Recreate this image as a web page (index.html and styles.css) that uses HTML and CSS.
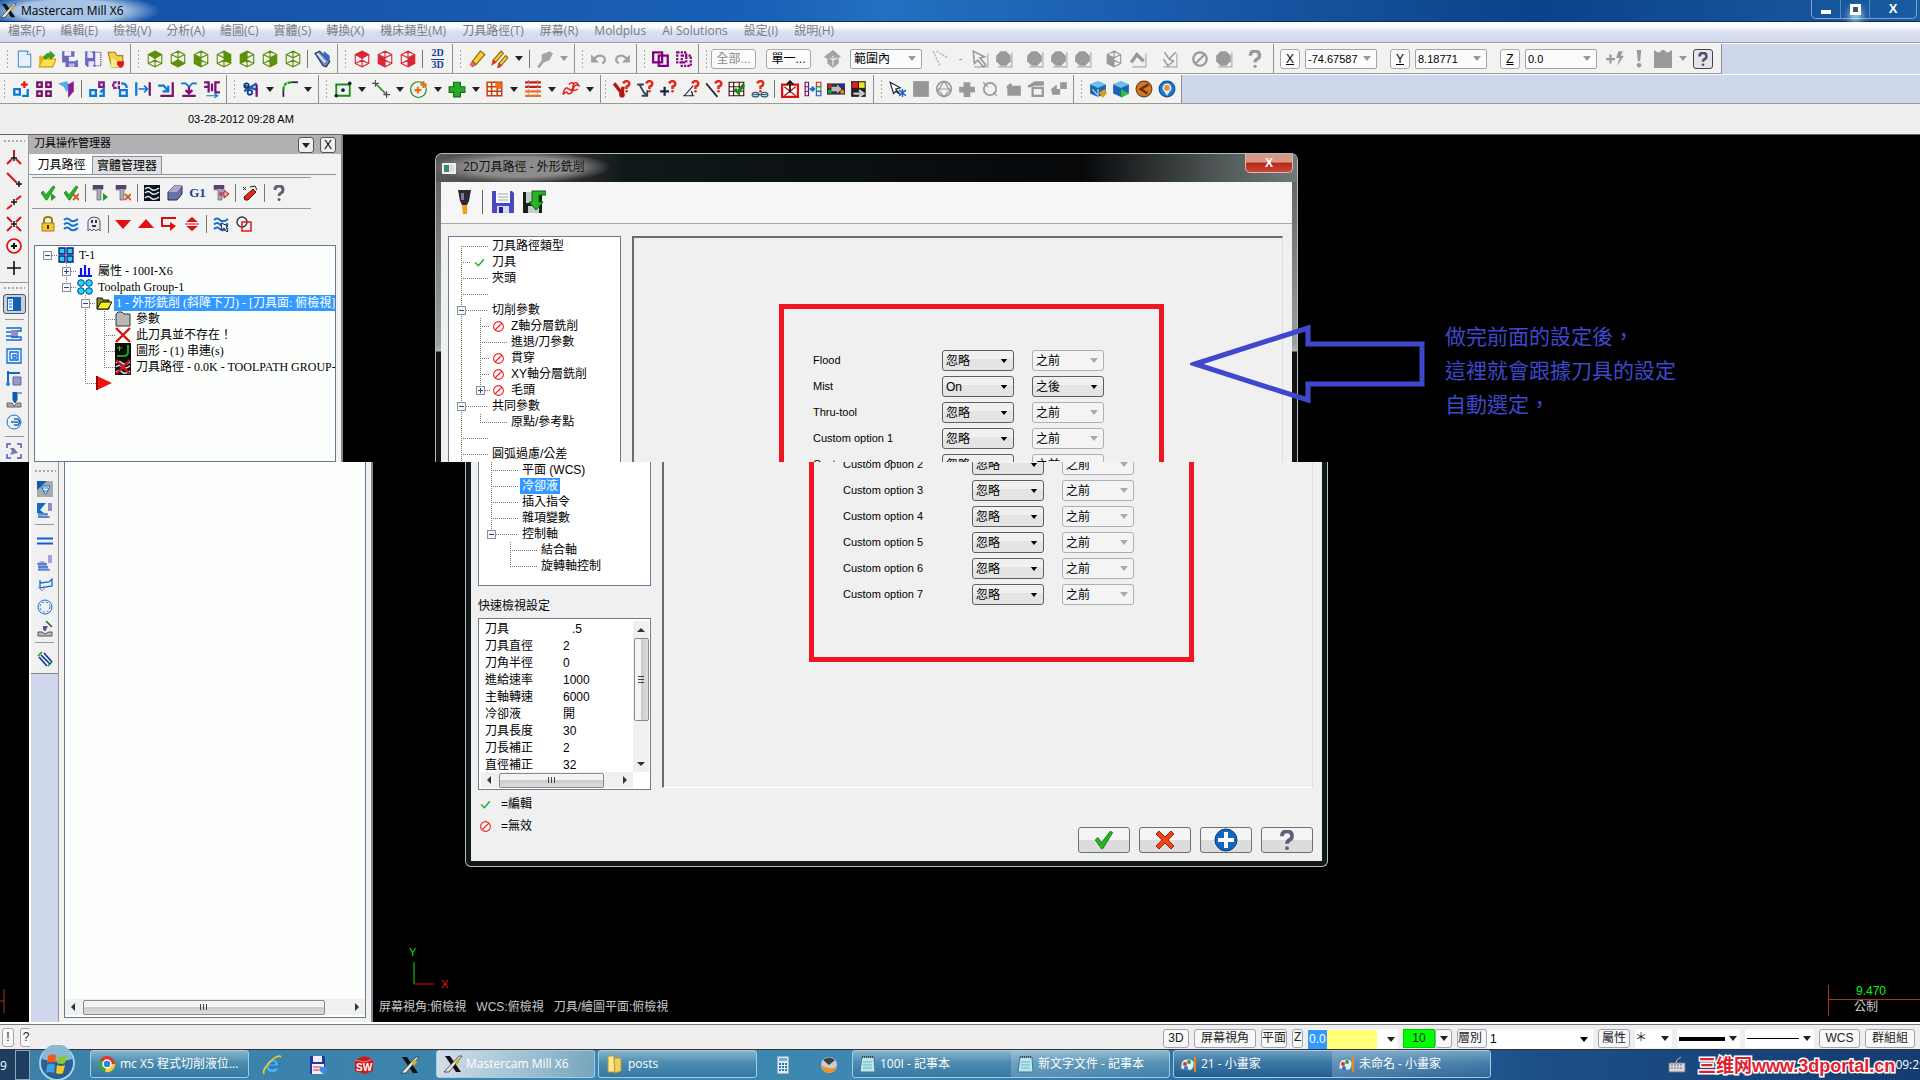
FILE: index.html
```html
<!DOCTYPE html>
<html lang="zh-Hant">
<head>
<meta charset="utf-8">
<title>Mastercam Mill X6</title>
<link rel="stylesheet" href="styles.css">
</head>
<body>
<svg class="defs" aria-hidden="true">
<symbol id="new" viewBox="0 0 16 16"><path d="M3 1h8l3 3v11H3z" fill="#e4f2ff" stroke="#5b93c9"/><path d="M11 1v3h3" fill="#fff" stroke="#5b93c9"/></symbol>
<symbol id="open" viewBox="0 0 16 16"><path d="M1 5h5l1 1h6v3H4l-3 6z" fill="#e8b820"/><path d="M4 8h12l-3 7H1z" fill="#ffe24a" stroke="#c99a10"/><path d="M5 7q2-5 6-4V1l4 4-4 3V6q-3 0-4 2z" fill="#2da82d" stroke="#157015" stroke-width=".5"/></symbol>
<symbol id="save" viewBox="0 0 16 16"><path d="M1 1h11v8h3v6H4v-4H1z" fill="#6a68c0"/><path d="M3 1h6v4H3zM7 6h6v4H7z" fill="#f3f3ff"/><path d="M7 12h5v3H7z" fill="#b9bbe6"/></symbol>
<symbol id="savesel" viewBox="0 0 16 16"><path d="M1 1h9v14H3l-2-2z" fill="#6a68c0"/><path d="M3 1h5v6H3zM4 10h5v5H4z" fill="#e6e6fa"/><path d="M7 2h8v12H7" fill="none" stroke="#333a80" stroke-dasharray="1 1"/></symbol>
<symbol id="folderdn" viewBox="0 0 16 16"><path d="M1 2h6l2 3h5v10H4z" fill="#f3cf52" stroke="#a8801c"/><path d="M4 7l8 4-2 4H3z" fill="#ffe68a"/><path d="M9 10h6v3l-3 3-3-3z" fill="#d81818"/></symbol>
<symbol id="cube" viewBox="0 0 16 16"><path d="M8 1l6 3v8l-6 3-6-3V4zM2 4l6 3 6-3M8 7v8M2 12l6-3 6 3M8 1v8" fill="none" stroke="currentColor"/></symbol>
<symbol id="ftop" viewBox="0 0 16 16"><path d="M8 1l6 3-6 4-6-4z" fill="currentColor"/></symbol>
<symbol id="fbot" viewBox="0 0 16 16"><path d="M8 8l6 4-6 3-6-3z" fill="currentColor"/></symbol>
<symbol id="fleft" viewBox="0 0 16 16"><path d="M2 4l6 3v8l-6-3z" fill="currentColor"/></symbol>
<symbol id="fright" viewBox="0 0 16 16"><path d="M14 4L8 7v8l6-3z" fill="currentColor"/></symbol>
<symbol id="fback" viewBox="0 0 16 16"><path d="M8 1l6 3v8L8 9z" fill="currentColor"/></symbol>
<symbol id="fbackl" viewBox="0 0 16 16"><path d="M8 1L2 4v8l6-3z" fill="currentColor"/></symbol>
<symbol id="pan" viewBox="0 0 16 16"><path d="M1 3l4-2 9 9-3 5-3-1z" fill="#6b86b8" stroke="#26365c"/><path d="M3 3l7 8" stroke="#dfe9ff" stroke-width="2"/><path d="M9 1l5 4v4L8 4z" fill="#2f6fd0"/></symbol>
<symbol id="pencil" viewBox="0 0 16 16"><path d="M4 10L11 1l4 3-8 9z" fill="#f7cf30" stroke="#8c6410"/><path d="M4 10l3 3-3 2-2-2z" fill="#f06a6a" stroke="#a01818" stroke-width=".6"/></symbol>
<symbol id="pencils" viewBox="0 0 16 16"><path d="M2 9L9 1l2 2-7 8zM7 12l6-7 2 2-6 7z" fill="#f7cf30" stroke="#8c6410"/><path d="M2 9l2 2-3 2zM7 12l2 2-3 2z" fill="#e03030" stroke="#e03030"/></symbol>
<symbol id="gpen" viewBox="0 0 16 16"><path d="M5 4l7-3 3 2-3 6-5 2-4 5-2-1 4-6z" fill="#a5a5a5"/></symbol>
<symbol id="undo" viewBox="0 0 16 16"><path d="M3 9q4-6 9-3 3 3-1 6" fill="none" stroke="#a0a0a0" stroke-width="2"/><path d="M1 4v7h7z" fill="#a0a0a0"/></symbol>
<symbol id="redo" viewBox="0 0 16 16"><path d="M13 9Q9 3 4 6q-3 3 1 6" fill="none" stroke="#a0a0a0" stroke-width="2"/><path d="M15 4v7H8z" fill="#a0a0a0"/></symbol>
<symbol id="dup" viewBox="0 0 16 16"><path d="M1 2h8v9H1zM6 5h8v9H6z" fill="none" stroke="#800080" stroke-width="2"/></symbol>
<symbol id="dupd" viewBox="0 0 16 16"><path d="M2 2h8v9H2zM6 5h8v9H6z" fill="none" stroke="#800080" stroke-width="2" stroke-dasharray="2 1"/></symbol>
<symbol id="blob" viewBox="0 0 16 16"><path d="M15 2v13H3" fill="none" stroke="#aaa"/><path d="M5 1h5l4 4v5l-4 4H5l-4-4V5z" fill="#9a9a9a"/></symbol>
<symbol id="gcur" viewBox="0 0 16 16"><path d="M15 3v12H3" fill="none" stroke="#aaa"/><path d="M2 1l10 5-4 1 5 6-2 2-5-6-3 3z" fill="none" stroke="#999" stroke-width="1.400"/></symbol>
<symbol id="gdot" viewBox="0 0 16 16"><path d="M1 1l6 13M4 1l10 6" stroke="#aaa" stroke-dasharray="2 1" fill="none"/></symbol>
<symbol id="ghouse" viewBox="0 0 16 16"><path d="M0 6l8-6 7 6-2 1v5l-5 4-5-4V8z" fill="#a2a2a2"/><path d="M8 5v9M5 7l3 2 4-2" stroke="#eee" fill="none"/></symbol>
<symbol id="gup" viewBox="0 0 16 16"><path d="M15 3v12H3" fill="none" stroke="#aaa"/><path d="M2 11l5-7 6 6" fill="none" stroke="#999" stroke-width="3"/></symbol>
<symbol id="gchk" viewBox="0 0 16 16"><path d="M15 3v12H3" fill="none" stroke="#aaa"/><path d="M4 2l4 6 4 2-5 4-4-6M8 8l6-6" fill="none" stroke="#999" stroke-width="1.300"/></symbol>
<symbol id="gno" viewBox="0 0 16 16"><circle cx="8" cy="8" r="6" fill="none" stroke="#999" stroke-width="2"/><path d="M4 12l8-8" stroke="#999" stroke-width="2"/></symbol>
<symbol id="q" viewBox="0 0 16 16"><path d="M4 5q0-4 4-4t4 4q0 2-2 3-2 1-2 3" fill="none" stroke="currentColor" stroke-width="3"/><circle cx="8" cy="14.500" r="1.500" fill="currentColor"/></symbol>
<symbol id="bolt" viewBox="0 0 16 16"><path d="M0 7h3V4h2v3h3v2H5v3H3V9H0zM11 1h4l-2 4h3l-6 9 2-7H9z" fill="#999"/></symbol>
<symbol id="bang" viewBox="0 0 16 16"><path d="M6 0h4l-1 10H7z" fill="#999"/><circle cx="8" cy="13.500" r="2" fill="#999"/></symbol>
<symbol id="gbox" viewBox="0 0 16 16"><path d="M0 0l3 2h2l2-2h2l2 2h2l3-2v16H0z" fill="#9a9a9a"/></symbol>
<symbol id="copyrot" viewBox="0 0 16 16"><path d="M2 8h5v5H2z" fill="none" stroke="#0a78d8" stroke-width="2"/><path d="M9 14h5V8" fill="none" stroke="#0a78d8" stroke-width="2"/><path d="M11 1v6M8 4h6" stroke="#e01818" stroke-width="2"/></symbol>
<symbol id="four" viewBox="0 0 16 16"><path d="M2 2h4v4H2zM10 2h4v4h-4zM2 10h4v4H2zM10 10h4v4h-4z" fill="none" stroke="#7a1070" stroke-width="2"/></symbol>
<symbol id="mirror" viewBox="0 0 16 16"><path d="M0 3l8-2 2 3-2 7-3-5z" fill="#58a8f0"/><path d="M9 4l5-3v9l-5 6z" fill="#8a1a90"/></symbol>
<symbol id="xf1" viewBox="0 0 16 16"><path d="M2 9h5v5H2z" fill="none" stroke="#0a78d8" stroke-width="2"/><path d="M10 2h4v4h-4z" fill="none" stroke="#8a1080" stroke-width="2"/><path d="M10 14h4V8l-3 3" fill="none" stroke="#0a78d8" stroke-width="2"/></symbol>
<symbol id="xf2" viewBox="0 0 16 16"><path d="M2 2h5v5H2z" fill="none" stroke="#8a1080" stroke-width="2" stroke-dasharray="3 1"/><path d="M8 9h6v5H8z" fill="none" stroke="#0a78d8" stroke-width="2"/><path d="M9 3q5 0 5 4" fill="none" stroke="#0a78d8" stroke-width="2"/></symbol>
<symbol id="xf3" viewBox="0 0 16 16"><path d="M2 2v12" stroke="#0a78d8" stroke-width="2"/><path d="M14 2v12" stroke="#7a1070" stroke-width="2"/><path d="M4 8h8M9 5l3 3-3 3" stroke="#0a78d8" fill="none" stroke-width="1.500"/></symbol>
<symbol id="xf4" viewBox="0 0 16 16"><path d="M1 5h5l4 5M10 5v5H5" stroke="#0a78d8" fill="none" stroke-width="2"/><path d="M14 2v12H3" stroke="#7a1070" fill="none" stroke-width="2"/></symbol>
<symbol id="xf5" viewBox="0 0 16 16"><path d="M1 3h4l3 3 3-3h4" stroke="#0a78d8" fill="none" stroke-width="1.500"/><path d="M2 14h12M8 6v6M5 9l3 3 3-3" stroke="#7a1070" fill="none" stroke-width="2"/></symbol>
<symbol id="xf6" viewBox="0 0 16 16"><path d="M1 2h4v9M15 2h-4v9h4M1 6h4M8 3v7" stroke="#7a1070" fill="none" stroke-width="2"/><path d="M3 14h10M10 12l3 2-3 2" stroke="#0a78d8" fill="none"/></symbol>
<symbol id="trim" viewBox="0 0 16 16"><path d="M2 5l12 4M2 10l11-7" stroke="#1560b0" stroke-width="2"/><circle cx="4" cy="5" r="2" fill="none" stroke="#103a80" stroke-width="1.500"/><circle cx="7" cy="11" r="2" fill="none" stroke="#103a80" stroke-width="1.500"/><path d="M13 4v11" stroke="#7a1070" stroke-width="2"/></symbol>
<symbol id="fillet" viewBox="0 0 16 16"><path d="M3 15V9" stroke="#223" fill="none" stroke-width="1.500"/><path d="M3 9q0-7 7-7" stroke="#1a9a1a" fill="none" stroke-width="2" stroke-dasharray="3 1"/><path d="M10 2h6" stroke="#223" stroke-width="1.500"/></symbol>
<symbol id="point" viewBox="0 0 16 16"><path d="M2 4h12v10H2z" fill="none" stroke="#1a8a1a" stroke-width="1.600"/><circle cx="8" cy="9" r="1.600" fill="#123"/><circle cx="14" cy="3" r="1.600" fill="#123"/><circle cx="2" cy="14" r="1.600" fill="#123"/></symbol>
<symbol id="line" viewBox="0 0 16 16"><path d="M3 3l10 10" stroke="#2a9a2a" stroke-width="1.500"/><path d="M0 3h6M3 0v6M10 13h6M13 10v6" stroke="#546"/></symbol>
<symbol id="arc" viewBox="0 0 16 16"><circle cx="7.500" cy="8.500" r="7" fill="none" stroke="#1a8a1a"/><path d="M4 9h6M7 6v6M12 1v6M9 4h6" stroke="#f06a10" stroke-width="1.800"/></symbol>
<symbol id="gplus" viewBox="0 0 16 16"><path d="M5 2h6v4h4v5h-4v4H5v-4H1V6h4z" fill="#2aa82a" stroke="#117011"/></symbol>
<symbol id="surf" viewBox="0 0 16 16"><path d="M1 2h13v12H1zM1 6h13M1 10h13M5 2v12M10 2v12" fill="none" stroke="#c04010" stroke-width="1.300"/><circle cx="11" cy="5" r="3" fill="#f07020"/></symbol>
<symbol id="bars" viewBox="0 0 16 16"><path d="M1 2h14M1 6h14" stroke="#d01818" stroke-width="2"/><path d="M1 10h14M1 14h14" stroke="#f07020" stroke-width="2"/><path d="M4 0v16M12 0v16" stroke="#999" stroke-dasharray="1 1"/></symbol>
<symbol id="curl" viewBox="0 0 16 16"><path d="M1 13q1-8 5-5t4-5q3-2 5 2-4-2-5 3t-5 4q-1-3-4 1M6 4q3-3 5 0M4 7q6 4 10 1" fill="none" stroke="#e02020" stroke-width="1.300"/></symbol>
<symbol id="aq1" viewBox="0 0 16 16"><path d="M1 3l7 9 1-6" fill="none" stroke="#b01818" stroke-width="3"/><circle cx="8" cy="13" r="2.500" fill="#b01818"/></symbol>
<symbol id="aq2" viewBox="0 0 16 16"><path d="M1 4h6M3 4l4 7 3 3M10 9v5H5" fill="none" stroke="#345" stroke-width="1.600"/></symbol>
<symbol id="aq3" viewBox="0 0 16 16"><path d="M1 10h8M5 6v8" stroke="#224" stroke-width="2"/></symbol>
<symbol id="aq4" viewBox="0 0 16 16"><path d="M1 14h10M2 14l8-9M8 10q2 2 1 4" fill="none" stroke="#224"/></symbol>
<symbol id="aq5" viewBox="0 0 16 16"><path d="M1 3l10 12" stroke="#224" stroke-width="1.500"/></symbol>
<symbol id="aq6" viewBox="0 0 16 16"><path d="M1 2h13v12H1zM1 6h13M1 10h13M5 2v12M10 2v12" fill="#fff" stroke="#401010"/><path d="M6 8l3 3 5-7" fill="none" stroke="#109010" stroke-width="3"/></symbol>
<symbol id="aq7" viewBox="0 0 16 16"><path d="M2 13h12" stroke="#357" stroke-width="1"/><ellipse cx="4" cy="13" rx="3" ry="2" fill="none" stroke="#357"/><ellipse cx="12" cy="13" rx="3" ry="2" fill="none" stroke="#357"/></symbol>
<symbol id="rq" viewBox="0 0 16 16"><path d="M9 3q1-2 3-2t2.500 2q0 2-2.500 3v2" fill="none" stroke="#e02818" stroke-width="2.200"/><circle cx="12" cy="10" r="1.200" fill="#e02818"/></symbol>
<symbol id="mc1" viewBox="0 0 16 16"><path d="M1 4h14v11H1z" fill="#fff" stroke="#e01010" stroke-width="2"/><path d="M3 6l10 8M13 6L3 14" stroke="#a01010"/><path d="M8 1v10M5 4l3-3 3 3" fill="none" stroke="#111" stroke-width="1.500"/></symbol>
<symbol id="mc2" viewBox="0 0 16 16"><path d="M1 2h3v4H1zM1 6h3v4H1zM1 10h3v4H1z" fill="none" stroke="#6a106a"/><path d="M11 2h4v4h-4z" fill="none" stroke="#e02020"/><path d="M11 6h4v4h-4z" fill="none" stroke="#20a020"/><path d="M11 10h4v4h-4z" fill="none" stroke="#2050e0"/><path d="M5 8h4M7 6l2 2-2 2" stroke="#0a78d8" fill="none" stroke-width="2"/></symbol>
<symbol id="mc3" viewBox="0 0 16 16"><path d="M0 3h16v10H0z" fill="#334"/><path d="M1 4h3v3H1z" fill="#e02020"/><path d="M1 9h3v3H1z" fill="#2a2"/><path d="M12 4h3v3h-3z" fill="#22d"/><path d="M12 9h3v3h-3z" fill="#f80"/><path d="M4 6h5V4l4 4-4 4v-2H4z" fill="#bbb"/></symbol>
<symbol id="mc4" viewBox="0 0 16 16"><path d="M1 1h13v14H1z" fill="#222"/><path d="M2 2h5v5H2z" fill="#e82020"/><path d="M8 2h5v5H8z" fill="#f8e020"/><path d="M3 12h8M8 9l4 3-4 3" fill="none" stroke="#ccc" stroke-width="2"/></symbol>
<symbol id="sel" viewBox="0 0 16 16"><path d="M1 2l9 5-4 1 4 5-4-3-2 2z" fill="#fff" stroke="#123"/><path d="M12 8v7M9 9l6 5M15 9l-6 5" stroke="#1a60c8" stroke-width="1.300"/></symbol>
<symbol id="gsq" viewBox="0 0 16 16"><path d="M1 1h14v14H1z" fill="#989898"/></symbol>
<symbol id="gglobe" viewBox="0 0 16 16"><circle cx="8" cy="8" r="6.500" fill="none" stroke="#999" stroke-width="1.500"/><path d="M8 1L3 9l5 6 5-6zM1 8h14" fill="none" stroke="#999"/></symbol>
<symbol id="gpl" viewBox="0 0 16 16"><path d="M5 2h6v4h4v5h-4v4H5v-4H1V6h4z" fill="#989898"/></symbol>
<symbol id="gring" viewBox="0 0 16 16"><circle cx="8" cy="8" r="5.500" fill="none" stroke="#999" stroke-width="1.500"/><path d="M2 2l4 4M14 14l-3-3" stroke="#999"/></symbol>
<symbol id="gcb" viewBox="0 0 16 16"><path d="M2 6l3-3h2v2h8v9H3V8z" fill="#989898"/></symbol>
<symbol id="gw" viewBox="0 0 16 16"><path d="M1 6l6-4h7v2H7zM5 7h9v7H5z" fill="none" stroke="#999" stroke-width="2"/></symbol>
<symbol id="gm" viewBox="0 0 16 16"><path d="M9 2h6v6H9zM1 8l5-4v4h3v5H2z" fill="#989898"/></symbol>
<symbol id="b1" viewBox="0 0 16 16"><path d="M1 4l7-3 7 3v8l-7 3-7-3z" fill="#1d63b0"/><path d="M1 4l7 3 7-3-7-3z" fill="#69c0f0"/><path d="M8 8v7M3 8l4 5" stroke="#bfe4ff"/><path d="M9 11l5-3 2 4-4 4z" fill="#d8a020"/></symbol>
<symbol id="b2" viewBox="0 0 16 16"><path d="M1 4l7-3 7 3v8l-7 3-7-3z" fill="#1d63b0"/><path d="M1 4l7 3 7-3-7-3z" fill="#69c0f0"/><path d="M8 8l7 4-7 4z" fill="#30c030"/></symbol>
<symbol id="b3" viewBox="0 0 16 16"><circle cx="8" cy="8" r="7" fill="#d87818" stroke="#6b4020"/><path d="M12 4L5 8l6 4" fill="none" stroke="#583010" stroke-width="2"/></symbol>
<symbol id="b4" viewBox="0 0 16 16"><circle cx="8" cy="8" r="7" fill="#1a78d0" stroke="#185080"/><path d="M8 14l-4-6q0-5 4-5t4 5z" fill="#d8f0ff"/><circle cx="8" cy="7" r="2.500" fill="#f09020"/></symbol>
<symbol id="v1" viewBox="0 0 16 16"><path d="M1 14l5-5M15 14l-5-5M8 0v4" stroke="#e01010" stroke-width="2"/><path d="M8 4v7M5 8h6" stroke="#111" stroke-width="1.500"/></symbol>
<symbol id="v2" viewBox="0 0 16 16"><path d="M1 1l10 10" stroke="#e01010" stroke-width="2"/><path d="M13 9v6M10 12h6" stroke="#111" stroke-width="1.500"/></symbol>
<symbol id="v3" viewBox="0 0 16 16"><path d="M1 15l5-4M10 6l5-4" stroke="#e01010" stroke-width="2"/><path d="M8 5v6M5 8h6" stroke="#111" stroke-width="1.500"/></symbol>
<symbol id="v4" viewBox="0 0 16 16"><path d="M1 1l5 5M10 10l5 5M15 1l-5 5M6 10l-5 5" stroke="#e01010" stroke-width="2"/><path d="M8 5v6M5 8h6" stroke="#111" stroke-width="1.500"/></symbol>
<symbol id="v5" viewBox="0 0 16 16"><circle cx="8" cy="8" r="7" fill="none" stroke="#e01010" stroke-width="1.700"/><path d="M8 5v6M5 8h6" stroke="#111" stroke-width="2"/></symbol>
<symbol id="v6" viewBox="0 0 16 16"><path d="M8 1v14M1 8h14" stroke="#111" stroke-width="1.600"/></symbol>
<symbol id="v7" viewBox="0 0 16 16"><path d="M1 1h14v14H1z" fill="#0e62b8"/><path d="M2 3h5v11H2z" fill="#e8f2fc"/><path d="M3 5h3M3 8h3M3 11h3" stroke="#0e62b8"/></symbol>
<symbol id="v8" viewBox="0 0 16 16"><path d="M5 4h7v8H5z" fill="#8f8fc0"/><path d="M0 2h15v3h-4M0 6h5M5 11h10v3H0M0 10h5" fill="none" stroke="#0e6cc8" stroke-width="1.400"/></symbol>
<symbol id="v9" viewBox="0 0 16 16"><path d="M1 1h14v14H1zM4 4h8v8H4zM7 7h3v3H7z" fill="#e4f0fc" stroke="#0e6cc8" stroke-width="1.300"/></symbol>
<symbol id="v10" viewBox="0 0 16 16"><path d="M2 1v13M2 3h12" stroke="#0e6cc8" stroke-width="2"/><path d="M7 7h8v8H7z" fill="#9a9ac8" stroke="#5a6aa8"/><circle cx="2" cy="14" r="2" fill="#2a80d8"/></symbol>
<symbol id="v11" viewBox="0 0 16 16"><path d="M7 0h4v8l-2 3-2-3zM12 1h4" fill="#0e58b0" stroke="#0e58b0"/><path d="M1 11h5l2 3 3-3h4v4H1z" fill="#aaa" stroke="#666"/></symbol>
<symbol id="v12" viewBox="0 0 16 16"><circle cx="8" cy="8" r="7" fill="none" stroke="#0e6cc8"/><path d="M8 5h4q3 3 0 6H8M5 8h7" fill="none" stroke="#0e6cc8" stroke-width="1.600"/></symbol>
<symbol id="v13" viewBox="0 0 16 16"><path d="M1 5V1h4M11 1h4v4M15 11v4h-4M5 15H1v-4" fill="none" stroke="#4a58c8" stroke-width="1.500"/><path d="M4 5h4l4 5-5 1-3 1 2-4z" fill="#7878b0"/></symbol>
<symbol id="w1" viewBox="0 0 16 16"><path d="M0 0h16v16H0z" fill="#aaa"/><path d="M0 0h10L0 9z" fill="#0e5cb0"/><path d="M4 5h9l-4 8h-1z" fill="#fff" stroke="#0e6cc8"/><path d="M5 7h6M6 10h4" stroke="#0e6cc8"/></symbol>
<symbol id="w2" viewBox="0 0 16 16"><path d="M0 0h9L3 7l4 3H0z" fill="#0e6cc8"/><path d="M11 0h4v8h-4z" fill="#9090c8"/><path d="M1 10h9l2 5H1z" fill="#a0b0e0"/><path d="M1 11h10M1 14h12" stroke="#1a5ac0"/></symbol>
<symbol id="w3" viewBox="0 0 16 16"><path d="M0 5.500h16M0 10.500h16" stroke="#1060d0" stroke-width="2"/></symbol>
<symbol id="w4" viewBox="0 0 16 16"><path d="M11 0h4v8h-4z" fill="#a8a0d8"/><path d="M1 8q5-5 9 2l2 5H1z" fill="#9aa8e0"/><path d="M0 9h10M1 12h10M1 15h12" stroke="#1a5ac0"/></symbol>
<symbol id="w5" viewBox="0 0 16 16"><path d="M3 3v8l12-2V2l-3 3-9 1" fill="none" stroke="#1a68d0" stroke-width="1.300"/><path d="M1 10l4 4 4-4" fill="none" stroke="#99b"/></symbol>
<symbol id="w6" viewBox="0 0 16 16"><circle cx="8" cy="8" r="7" fill="none" stroke="#1a68d0"/><circle cx="8" cy="8" r="5" fill="none" stroke="#1a68d0" stroke-dasharray="2 2"/></symbol>
<symbol id="w7" viewBox="0 0 16 16"><path d="M9 0l6 6M8 5v5" stroke="#1a6a1a" stroke-width="1.500"/><path d="M6 5h5l-2 4H6z" fill="#60508a"/><path d="M1 11h4l3 2 4-2h3v4H1z" fill="#bbc" stroke="#555"/></symbol>
<symbol id="w8" viewBox="0 0 16 16"><path d="M1 5l4-4M11 15l4-4" stroke="#1a9a1a" stroke-width="1.500"/><path d="M2 6l8 9M4 4l9 9M7 2l8 9" stroke="#103a90" stroke-width="1.700"/></symbol>
<symbol id="ok" viewBox="0 0 16 16"><path d="M1 8l2-2 3 4 7-9 2 1-8 13H6z" fill="#28b428" stroke="#117711" stroke-width=".7"/></symbol>
<symbol id="gp" viewBox="0 0 16 16"><path d="M11 8l5 4-5 4z" fill="#18a018"/></symbol>
<symbol id="rx" viewBox="0 0 16 16"><path d="M10 9l6 6M16 9l-6 6" stroke="#e05018" stroke-width="1.800"/></symbol>
<symbol id="tool" viewBox="0 0 16 16"><path d="M1 0h10v4l-2 1v10H5V5H1z" fill="#a8a8b8" stroke="#555" stroke-width=".6"/><path d="M1 0h10v4H1z" fill="#5a4070"/></symbol>
<symbol id="bwave" viewBox="0 0 16 16"><path d="M0 0h16v16H0z" fill="#0c1018"/><path d="M1 4q3-3 6 0t8-1M1 8q3-3 6 0t8-1M1 13q3-3 6 0t8-1" fill="none" stroke="#d8f0ff" stroke-width="1.500"/></symbol>
<symbol id="wave" viewBox="0 0 16 16"><path d="M1 4q3-3 6 0t8-1M1 8.500q3-3 6 0t8-1M1 13q3-3 6 0t8-1" fill="none" stroke="#1070d0" stroke-width="1.800"/></symbol>
<symbol id="stock" viewBox="0 0 16 16"><path d="M1 7l6-6h8v8l-5 6H1z" fill="#6a70a8" stroke="#2a2a50"/><path d="M1 7l6-6h8l-5 6z" fill="#a8acd0"/></symbol>
<symbol id="erase" viewBox="0 0 16 16"><path d="M2 12L11 4l3 3-8 8H3z" fill="#e02818" stroke="#501010"/><path d="M1 2l3 3M4 2L1 5M8 2l5-1 2 4" stroke="#222" fill="none"/></symbol>
<symbol id="lock" viewBox="0 0 16 16"><path d="M4 7V4q0-3 4-3t4 3v3" fill="none" stroke="#a07810" stroke-width="2"/><path d="M2 7h12v8H2z" fill="#f8c828" stroke="#a07810"/><path d="M8 9v4" stroke="#402800" stroke-width="2"/></symbol>
<symbol id="ghost" viewBox="0 0 16 16"><path d="M2 15V5q1-4 6-4t6 4v10l-2-2-2 2-2-2-2 2-2-2z" fill="#e8e8f0" stroke="#556"/><path d="M5 4h2v3H5zM9 4h2v3H9zM6 9h4v2H6z" fill="#334"/></symbol>
<symbol id="dn" viewBox="0 0 16 16"><path d="M0 4h16l-8 9z" fill="#e01010"/></symbol>
<symbol id="up" viewBox="0 0 16 16"><path d="M0 12h16L8 3z" fill="#e01010"/></symbol>
<symbol id="ins" viewBox="0 0 16 16"><path d="M15 2H1v8h9" fill="none" stroke="#d01010" stroke-width="2"/><path d="M9 6l6 4-6 5z" fill="#e01010"/></symbol>
<symbol id="ud" viewBox="0 0 16 16"><path d="M2 6h12L8 1zM2 10h12l-6 5z" fill="#e01010"/><path d="M1 8h14" stroke="#e01010"/></symbol>
<symbol id="geo" viewBox="0 0 16 16"><circle cx="6" cy="6" r="5" fill="none" stroke="#333" stroke-width="1.400"/><path d="M6 6h9v9H6z" fill="none" stroke="#e01818" stroke-width="1.500"/></symbol>
<symbol id="cur" viewBox="0 0 16 16"><path d="M8 7l7 3-2 1 2 4-1 1-3-4-2 2z" fill="#fff" stroke="#222"/></symbol>
<symbol id="grp" viewBox="0 0 16 16"><path d="M1 1h6v6H1zM9 1h6v6H9zM1 9h6v6H1zM9 9h6v6H9z" fill="#18d8e8" stroke="#101080" stroke-width="1.300"/></symbol>
<symbol id="props" viewBox="0 0 16 16"><path d="M1 13h14M4 13V5M8 13V2M12 13V5" stroke="#1010f0" stroke-width="2.200" fill="none"/></symbol>
<symbol id="dots" viewBox="0 0 16 16"><g fill="#18e0f0" stroke="#1030a0"><circle cx="4" cy="4" r="3.300"/><circle cx="12" cy="4" r="3.300"/><circle cx="4" cy="12" r="3.300"/><circle cx="12" cy="12" r="3.300"/></g></symbol>
<symbol id="fold" viewBox="0 0 16 16"><path d="M1 3h5l1 2h6v9H1z" fill="#8a8a10" stroke="#111"/><path d="M5 7h11l-4 7H1z" fill="#f8f020" stroke="#111"/></symbol>
<symbol id="gfold" viewBox="0 0 16 16"><path d="M1 3l2-2h4l2 2h6v12H1z" fill="#b8b8b8" stroke="#333"/></symbol>
<symbol id="bigx" viewBox="0 0 16 16"><path d="M1 1l14 14M15 1L1 15" stroke="#e01010" stroke-width="2.400"/></symbol>
<symbol id="gframe" viewBox="0 0 16 16"><path d="M0 0h16v16H0z" fill="#080c08"/><path d="M13 2v7q0 4-5 4H2" fill="none" stroke="#18a018" stroke-width="2"/><path d="M2 5h5M4.500 3v5" stroke="#30d030"/></symbol>
<symbol id="play" viewBox="0 0 16 16"><path d="M1 1l15 7-15 7z" fill="#f01010"/><path d="M1 1v14" stroke="#900" stroke-width="2"/></symbol>
<symbol id="no" viewBox="0 0 12 12"><circle cx="6" cy="6" r="4.500" fill="#fff" stroke="#f02020"/><path d="M3 9l6-6" stroke="#f02020"/></symbol>
<symbol id="chk" viewBox="0 0 12 12"><path d="M2 6l3 3 5-6" fill="none" stroke="#20b030" stroke-width="1.400"/></symbol>
<symbol id="mill" viewBox="0 0 24 24"><path d="M6 0h13l-2 11-2 4h-5l-2-4z" fill="#2c2838"/><path d="M9 3h3v7H9z" fill="#807890"/><path d="M10 15h5v9h-4z" fill="#f0a010"/></symbol>
<symbol id="disk" viewBox="0 0 24 24"><path d="M1 1h20l2 2v20H1z" fill="#4848c0"/><path d="M5 1h14v12H5z" fill="#f8f8ff"/><path d="M7 4h10M7 7h10M7 10h10" stroke="#aaa"/><path d="M6 16h12v7H6z" fill="#d8d8f0"/><path d="M8 17h4v6H8z" fill="#2020a0"/></symbol>
<symbol id="diskg" viewBox="0 0 24 24"><path d="M1 2h19v21H1z" fill="#16201a"/><path d="M4 2h6v11H4zM6 16h11v7H6z" fill="#c8ccc8"/><path d="M10 8V1h14v4h-7v7h4l-7 8-7-8h3z" fill="#28b428" stroke="#0c600c"/></symbol>
<symbol id="mx" viewBox="0 0 20 20"><path d="M2 2h5l11 16h-5z" fill="#111"/><path d="M16 2h3L6 18H1z" fill="#e8e4dc" stroke="#222" stroke-width=".7"/><path d="M12 8l3-4 2 3-3 4z" fill="#c8b030"/></symbol>
<symbol id="paint" viewBox="0 0 20 20"><path d="M2 12q0-7 7-7t6 6-5 5-8-1z" fill="#dff0f4" stroke="#6a8a98"/><circle cx="6" cy="10" r="2" fill="#e03030"/><circle cx="10" cy="8" r="2" fill="#30a040"/><circle cx="7" cy="14" r="2" fill="#2878d8"/><path d="M15 1l2 3v14h-2V4z" fill="#e88820"/></symbol>
<symbol id="note" viewBox="0 0 20 20"><path d="M4 3h12l1 15H2z" fill="#b8e8f0" stroke="#487890"/><path d="M5 8h9M5 11h9M5 14h9" stroke="#70b0c0"/><path d="M4 3h12" stroke="#444" stroke-width="2" stroke-dasharray="1 1"/></symbol>
<symbol id="docs" viewBox="0 0 20 20"><path d="M3 2h6l1 16H3z" fill="#ffe890" stroke="#b89830"/><path d="M9 4h7v13l-6 2z" fill="#f0d060" stroke="#b89830"/></symbol>
</svg>

<header class="titlebar">
  <svg class="i20"><use href="#mx"/></svg>
  <h1>Mastercam Mill X6</h1>
  <div class="caption"><button aria-label="Minimize"><i class="min"></i></button><button aria-label="Restore"><i class="rest"></i></button><button class="cx" aria-label="Close">X</button></div>
</header>
<nav class="menubar">
  <a href="#">檔案(F)</a><a href="#">編輯(E)</a><a href="#">檢視(V)</a><a href="#">分析(A)</a><a href="#">繪圖(C)</a><a href="#">實體(S)</a><a href="#">轉換(X)</a><a href="#">機床類型(M)</a><a href="#">刀具路徑(T)</a><a href="#">屏幕(R)</a><a href="#">Moldplus</a><a href="#">Ai Solutions</a><a href="#">設定(I)</a><a href="#">說明(H)</a>
</nav>

<div class="bar">
  <div class="group"><i class="grip"></i><button class="t"><svg><use href="#new"/></svg></button><button class="t"><svg><use href="#open"/></svg></button><button class="t"><svg><use href="#save"/></svg></button><button class="t"><svg><use href="#savesel"/></svg></button><button class="t"><svg><use href="#folderdn"/></svg></button></div>
  <div class="group green"><i class="grip"></i><button class="t"><svg><use href="#cube"/><use href="#ftop"/></svg></button><button class="t"><svg><use href="#cube"/><use href="#fbot"/></svg></button><button class="t"><svg><use href="#cube"/><use href="#fleft"/></svg></button><button class="t"><svg><use href="#cube"/><use href="#fback"/></svg></button><button class="t"><svg><use href="#cube"/><use href="#fbackl"/></svg></button><button class="t"><svg><use href="#cube"/><use href="#fright"/></svg></button><button class="t"><svg><use href="#cube"/></svg></button><i class="sep"></i><button class="t"><svg><use href="#pan"/></svg></button></div>
  <div class="group red"><i class="grip"></i><button class="t"><svg><use href="#cube"/><use href="#ftop"/></svg></button><button class="t"><svg><use href="#cube"/><use href="#fleft"/></svg></button><button class="t"><svg><use href="#cube"/><use href="#fright"/></svg></button><i class="sep"></i><button class="t dim"><b>2D</b><b>3D</b></button></div>
  <div class="group"><i class="grip"></i><button class="t"><svg><use href="#pencil"/></svg></button><button class="t"><svg><use href="#pencils"/></svg></button><button class="caret"></button><i class="sep"></i><button class="t"><svg><use href="#gpen"/></svg></button><button class="caret off"></button></div>
  <div class="group"><i class="grip"></i><button class="t"><svg><use href="#undo"/></svg></button><button class="t"><svg><use href="#redo"/></svg></button></div>
  <div class="group"><i class="grip"></i><button class="t"><svg><use href="#dup"/></svg></button><button class="t"><svg><use href="#dupd"/></svg></button></div>
  <div class="group wide"><i class="grip"></i><button class="txt off">全部...</button><i class="sp"></i><button class="txt">單一...</button><i class="sp"></i><button class="w"><svg><use href="#ghouse"/></svg></button><select class="combo range" aria-label="範圍"><option>範圍內</option></select><i class="sp"></i><button class="w"><svg><use href="#gdot"/></svg></button><button class="dash">-</button><button class="w"><svg><use href="#gcur"/></svg></button><button class="w"><svg><use href="#blob"/></svg></button><i class="sp"></i><button class="w"><svg><use href="#blob"/></svg></button><button class="w"><svg><use href="#blob"/></svg></button><button class="w"><svg><use href="#blob"/></svg></button><i class="sp"></i><button class="w grey"><svg><use href="#cube"/><use href="#fleft"/></svg></button><button class="w"><svg><use href="#gup"/></svg></button><i class="sp"></i><button class="w"><svg><use href="#gchk"/></svg></button><i class="sp"></i><button class="w"><svg><use href="#gno"/></svg></button><button class="w"><svg><use href="#blob"/></svg></button><i class="sp"></i><button class="w grey"><svg><use href="#q"/></svg></button></div>
  <div class="group coords"><button class="txt key"><u>X</u></button><select class="combo" aria-label="X"><option>-74.67587</option></select><i class="sp"></i><button class="txt key"><u>Y</u></button><select class="combo" aria-label="Y"><option>8.18771</option></select><i class="sp"></i><button class="txt key"><u>Z</u></button><select class="combo" aria-label="Z"><option>0.0</option></select><div class="run"><button class="w"><svg><use href="#bolt"/></svg></button><button class="w"><svg><use href="#bang"/></svg></button><button class="w"><svg><use href="#gbox"/></svg></button><button class="caret off"></button></div><button class="txt key help"><svg><use href="#q"/></svg></button></div>
</div>

<div class="bar two">
  <div class="group tight"><i class="grip"></i><button class="t"><svg><use href="#copyrot"/></svg></button><button class="t"><svg><use href="#four"/></svg></button><button class="t"><svg><use href="#mirror"/></svg></button><i class="sep"></i><button class="t"><svg><use href="#xf1"/></svg></button><button class="t"><svg><use href="#xf2"/></svg></button><button class="t"><svg><use href="#xf3"/></svg></button><button class="t"><svg><use href="#xf4"/></svg></button><button class="t"><svg><use href="#xf5"/></svg></button><button class="t"><svg><use href="#xf6"/></svg></button></div>
  <div class="group"><i class="grip"></i><button class="t"><svg><use href="#trim"/></svg></button><button class="caret"></button><button class="t"><svg><use href="#fillet"/></svg></button><button class="caret"></button></div>
  <div class="group"><i class="grip"></i><button class="t"><svg><use href="#point"/></svg></button><button class="caret"></button><button class="t"><svg><use href="#line"/></svg></button><button class="caret"></button><button class="t"><svg><use href="#arc"/></svg></button><button class="caret"></button><button class="t"><svg><use href="#gplus"/></svg></button><button class="caret"></button><button class="t"><svg><use href="#surf"/></svg></button><button class="caret"></button><button class="t"><svg><use href="#bars"/></svg></button><button class="caret"></button><button class="t"><svg><use href="#curl"/></svg></button><button class="caret"></button></div>
  <div class="group tight"><i class="grip"></i><button class="t"><svg><use href="#aq1"/><use href="#rq"/></svg></button><button class="t"><svg><use href="#aq2"/><use href="#rq"/></svg></button><button class="t"><svg><use href="#aq3"/><use href="#rq"/></svg></button><button class="t"><svg><use href="#aq4"/><use href="#rq"/></svg></button><button class="t"><svg><use href="#aq5"/><use href="#rq"/></svg></button><button class="t"><svg><use href="#aq6"/></svg></button><button class="t"><svg><use href="#aq7"/><use href="#rq" x="-4"/></svg></button><i class="sep"></i><button class="t"><svg><use href="#mc1"/></svg></button><button class="t"><svg><use href="#mc2"/></svg></button><button class="t"><svg><use href="#mc3"/></svg></button><button class="t"><svg><use href="#mc4"/></svg></button></div>
  <div class="group"><i class="grip"></i><button class="t"><svg><use href="#sel"/></svg></button><button class="t"><svg><use href="#gsq"/></svg></button><button class="t"><svg><use href="#gglobe"/></svg></button><button class="t"><svg><use href="#gpl"/></svg></button><button class="t"><svg><use href="#gring"/></svg></button><button class="t"><svg><use href="#gcb"/></svg></button><button class="t"><svg><use href="#gw"/></svg></button><button class="t"><svg><use href="#gm"/></svg></button></div>
  <div class="group"><i class="grip"></i><button class="t"><svg><use href="#b1"/></svg></button><button class="t"><svg><use href="#b2"/></svg></button><button class="t"><svg><use href="#b3"/></svg></button><button class="t"><svg><use href="#b4"/></svg></button></div>
</div>
<div class="ribbon">03-28-2012 09:28 AM</div>

<section class="work upper">
  <div class="vbar">
    <i class="hgrip"></i><button><svg><use href="#v1"/></svg></button><button><svg><use href="#v2"/></svg></button><button><svg><use href="#v3"/></svg></button><button><svg><use href="#v4"/></svg></button><button><svg><use href="#v5"/></svg></button><button><svg><use href="#v6"/></svg></button><i class="vline full"></i><i class="hgrip"></i><button class="pressed"><svg><use href="#v7"/></svg></button><i class="vline"></i><button><svg><use href="#v8"/></svg></button><button><svg><use href="#v9"/></svg></button><button><svg><use href="#v10"/></svg></button><button><svg><use href="#v11"/></svg></button><button><svg><use href="#v12"/></svg></button><i class="vline"></i><button><svg><use href="#v13"/></svg></button>
  </div>
  <aside class="manager">
    <div class="mtitle"><h2>刀具操作管理器</h2><button aria-label="Menu" class="caret"></button><button aria-label="Close">X</button></div>
    <div class="tabs"><button class="on">刀具路徑</button><button>實體管理器</button></div>
    <div class="mtools"><button class="t"><svg><use href="#ok"/><use href="#gp"/></svg></button><button class="t"><svg><use href="#ok"/><use href="#rx"/></svg></button><i class="sep"></i><button class="t"><svg><use href="#tool"/><use href="#gp"/></svg></button><button class="t"><svg><use href="#tool"/><use href="#rx"/></svg></button><i class="sep"></i><button class="t"><svg><use href="#bwave"/></svg></button><button class="t"><svg><use href="#stock"/></svg></button><button class="t g1">G1</button><button class="t"><svg viewBox="0 0 16 16"><use href="#tool"/><path d="M7 8h4V5l5 4-5 4v-3H7z" fill="#f0a0a0" stroke="#a01818"/></svg></button><i class="sep"></i><button class="t"><svg><use href="#erase"/></svg></button><i class="sep"></i><button class="t slate"><svg><use href="#q"/></svg></button></div>
    <div class="mtools"><button class="t"><svg><use href="#lock"/></svg></button><button class="t"><svg><use href="#wave"/></svg></button><button class="t"><svg><use href="#ghost"/></svg></button><i class="sep"></i><button class="t"><svg><use href="#dn"/></svg></button><button class="t"><svg><use href="#up"/></svg></button><button class="t"><svg><use href="#ins"/></svg></button><button class="t"><svg><use href="#ud"/></svg></button><i class="sep"></i><button class="t"><svg><use href="#wave"/><use href="#cur"/></svg></button><button class="t"><svg><use href="#geo"/></svg></button></div>
    <div class="mtree">
      <ul class="tree ops">
        <li class="root"><div class="row"><i class="exp"></i><i class="stub"></i><svg><use href="#grp"/></svg>T-1</div>
          <ul>
            <li><div class="row"><i class="exp plus"></i><i class="stub"></i><svg><use href="#props"/></svg>屬性 - 100I-X6</div></li>
            <li class="last"><div class="row"><i class="exp"></i><i class="stub"></i><svg><use href="#dots"/></svg>Toolpath Group-1</div>
              <ul>
                <li><div class="row"><i class="exp"></i><i class="stub"></i><svg><use href="#fold"/></svg><mark>1 - 外形銑削 (斜降下刀) - [刀具面: 俯檢視]</mark></div>
                  <ul>
                    <li><div class="row"><i class="stub"></i><svg><use href="#gfold"/></svg>參數</div></li>
                    <li><div class="row"><i class="stub"></i><svg><use href="#bigx"/></svg>此刀具並不存在！</div></li>
                    <li><div class="row"><i class="stub"></i><svg><use href="#gframe"/></svg>圖形 - (1) 串連(s)</div></li>
                    <li class="last"><div class="row"><i class="stub"></i><svg><use href="#bwave"/><use href="#bigx"/></svg>刀具路徑 - 0.0K - TOOLPATH GROUP-1</div></li>
                  </ul></li>
                <li class="last"><div class="row"><i class="stub"></i><svg><use href="#play"/></svg></div></li>
              </ul></li>
          </ul></li>
      </ul>
    </div>
  </aside>
  <main class="canvas">
    <div class="dialog top">
      <div class="dtitle"><i class="dico"></i><h2>2D刀具路徑 - 外形銑削</h2><button aria-label="Close">X</button></div>
      <div class="client">
        <div class="dtools"><svg><use href="#mill"/></svg><i></i><svg><use href="#disk"/></svg><svg><use href="#diskg"/></svg></div>
        <div class="dbody">
          <div class="left"><div class="ptree">
            <ul class="tree">
              <li class="first"><div class="row"><i class="stub"></i>刀具路徑類型</div></li>
              <li><div class="row"><i class="stub s"></i><svg><use href="#chk"/></svg>刀具</div></li>
              <li><div class="row"><i class="stub"></i>夾頭</div></li>
              <li><div class="row"><i class="stub"></i></div></li>
              <li><div class="row"><i class="exp"></i><i class="stub"></i>切削參數</div>
                <ul>
                  <li><div class="row"><i class="stub s"></i><svg><use href="#no"/></svg>Z軸分層銑削</div></li>
                  <li><div class="row"><i class="stub"></i>進退/刀參數</div></li>
                  <li><div class="row"><i class="stub s"></i><svg><use href="#no"/></svg>貫穿</div></li>
                  <li><div class="row"><i class="stub s"></i><svg><use href="#no"/></svg>XY軸分層銑削</div></li>
                  <li class="last"><div class="row"><i class="exp plus"></i><i class="stub s"></i><svg><use href="#no"/></svg>毛頭</div></li>
                </ul></li>
              <li><div class="row"><i class="exp"></i><i class="stub"></i>共同參數</div>
                <ul><li class="last"><div class="row"><i class="stub"></i>原點/參考點</div></li></ul></li>
              <li><div class="row"><i class="stub"></i></div></li>
              <li><div class="row"><i class="stub"></i>圓弧過慮/公差</div></li>
            </ul>
          </div></div>
          <div class="page"><div class="frame open"><div class="coolant">
            <label for="f1">Flood</label><select id="f1"><option>忽略</option></select><select disabled aria-label="Flood"><option>之前</option></select>
            <label for="f2">Mist</label><select id="f2"><option>On</option></select><select aria-label="Mist"><option>之後</option></select>
            <label for="f3">Thru-tool</label><select id="f3"><option>忽略</option></select><select disabled aria-label="Thru-tool"><option>之前</option></select>
            <label for="f4">Custom option 1</label><select id="f4"><option>忽略</option></select><select disabled aria-label="Custom option 1"><option>之前</option></select>
            <label for="f5">Custom option 2</label><select id="f5"><option>忽略</option></select><select disabled aria-label="Custom option 2"><option>之前</option></select>
          </div></div></div>
        </div>
      </div>
    </div>
    <svg class="arrow" viewBox="0 0 236 82"><path d="M5 41L118 5v16h114v40H118v16z" fill="none" stroke="#3f48cc" stroke-width="5"/></svg>
    <p class="memo">做完前面的設定後，<br>這裡就會跟據刀具的設定<br>自動選定，</p>
  </main>
</section>

<section class="work lower">
  <div class="edge"><svg viewBox="0 0 5 24"><path d="M4 0v24M0 12h4" stroke="#a03a18"/></svg></div>
  <div class="vbar">
    <i class="hgrip"></i><button><svg><use href="#w1"/></svg></button><button><svg><use href="#w2"/></svg></button><i class="vline"></i><button><svg><use href="#w3"/></svg></button><button><svg><use href="#w4"/></svg></button><button><svg><use href="#w5"/></svg></button><button><svg><use href="#w6"/></svg></button><button><svg><use href="#w7"/></svg></button><i class="vline"></i><button><svg><use href="#w8"/></svg></button><div class="fill"></div>
  </div>
  <aside class="manager">
    <div class="mtree"><div class="hscroll"><i class="al"></i><b></b><i class="ar"></i></div></div>
  </aside>
  <main class="canvas">
    <div class="dialog bottom">
      <div class="client"><div class="dbody">
        <div class="left">
          <div class="ptree">
            <ul class="tree">
              <li><div class="row"><i class="stub"></i>平面 (WCS)</div></li>
              <li><div class="row"><i class="stub"></i><mark>冷卻液</mark></div></li>
              <li><div class="row"><i class="stub"></i>插入指令</div></li>
              <li><div class="row"><i class="stub"></i>雜項變數</div></li>
              <li class="last"><div class="row"><i class="exp"></i><i class="stub"></i>控制軸</div>
                <ul><li><div class="row"><i class="stub"></i>結合軸</div></li><li class="last"><div class="row"><i class="stub"></i>旋轉軸控制</div></li></ul></li>
            </ul>
          </div>
          <h3>快速檢視設定</h3>
          <div class="quick">
            <div class="qrow"><table>
              <tr><th>刀具</th><td class="in">.5</td></tr><tr><th>刀具直徑</th><td>2</td></tr><tr><th>刀角半徑</th><td>0</td></tr><tr><th>進給速率</th><td>1000</td></tr><tr><th>主軸轉速</th><td>6000</td></tr><tr><th>冷卻液</th><td>開</td></tr><tr><th>刀具長度</th><td>30</td></tr><tr><th>刀長補正</th><td>2</td></tr><tr><th>直徑補正</th><td>32</td></tr>
            </table><div class="vscroll"><i class="au"></i><b></b><i class="ad"></i></div></div>
            <div class="hscroll"><i class="al"></i><b></b><i class="ar"></i></div>
          </div>
          <div class="legend"><svg><use href="#chk"/></svg>=編輯</div>
          <div class="legend"><svg><use href="#no"/></svg>=無效</div>
        </div>
        <div class="right">
          <div class="page"><div class="frame closed"><div class="coolant">
            <label for="g2">Custom option 2</label><select id="g2"><option>忽略</option></select><select disabled aria-label="Custom option 2"><option>之前</option></select>
            <label for="g3">Custom option 3</label><select id="g3"><option>忽略</option></select><select disabled aria-label="Custom option 3"><option>之前</option></select>
            <label for="g4">Custom option 4</label><select id="g4"><option>忽略</option></select><select disabled aria-label="Custom option 4"><option>之前</option></select>
            <label for="g5">Custom option 5</label><select id="g5"><option>忽略</option></select><select disabled aria-label="Custom option 5"><option>之前</option></select>
            <label for="g6">Custom option 6</label><select id="g6"><option>忽略</option></select><select disabled aria-label="Custom option 6"><option>之前</option></select>
            <label for="g7">Custom option 7</label><select id="g7"><option>忽略</option></select><select disabled aria-label="Custom option 7"><option>之前</option></select>
          </div></div></div>
          <div class="actions"><button aria-label="OK"><svg><use href="#ok"/></svg></button><button aria-label="Cancel"><svg viewBox="0 0 20 20"><path d="M1 4l3-3 6 6 6-6 3 3-6 6 6 6-3 3-6-6-6 6-3-3 6-6z" fill="#ee4418" stroke="#a02008"/></svg></button><button aria-label="Add"><svg class="big" viewBox="0 0 24 24"><circle cx="12" cy="12" r="11" fill="#1464c0" stroke="#0a3a80"/><path d="M12 4v16M4 12h16" stroke="#fff" stroke-width="4"/></svg></button><button class="slate" aria-label="Help"><svg><use href="#q"/></svg></button></div>
        </div>
      </div></div>
    </div>
    <div class="hud">
      <div class="axes"><svg viewBox="0 0 50 50"><path d="M6 16v22" stroke="#10e010"/><path d="M6 38h20" stroke="#e01010"/><text x="1" y="10" fill="#10e010">Y</text><text x="33" y="42" fill="#f01010">X</text></svg>
        <p>屏幕視角:俯檢視&nbsp;&nbsp; WCS:俯檢視&nbsp;&nbsp; 刀具/繪圖平面:俯檢視</p></div>
      <div class="units"><b>9.470</b><span>公制</span></div>
    </div>
  </main>
</section>

<footer class="status">
  <div class="frag"><button>!</button><button>?</button></div>
  <div class="fields">
    <button class="a">3D</button><button class="b">屏幕視角</button><button class="a">平面</button><label class="z" for="zd">Z</label>
    <span class="zbox"><input id="zd" value="0.0"><i class="caret"></i></span>
    <button class="color">10</button><button class="caret cb"></button>
    <label class="lv" for="lvl">層別</label><select id="lvl" class="level"><option>1</option></select>
    <button class="c">屬性</button><button class="pick p1"><span>＊</span><i class="caret"></i></button><button class="pick p2"><hr><i class="caret"></i></button><button class="pick p3"><hr><i class="caret"></i></button>
    <button class="d">WCS</button><button class="e">群組組</button>
  </div>
</footer>
<nav class="taskbar">
  <div class="frag">9<i></i></div>
  <button class="start" aria-label="Start"><svg viewBox="0 0 36 36"><circle cx="18" cy="18" r="17" fill="#2a6090" stroke="#a8d0e8" stroke-width="2"/><path d="M3 14a15 15 0 0 1 30 0q-15 5-30 0z" fill="#8ab8d0"/><path d="M9 11q4-3 8-1l-1 8q-4-2-8 0z" fill="#f05820"/><path d="M19 11q4 2 9-1l-2 8q-4 2-8 0z" fill="#88c838"/><path d="M8 20q4-3 8 0l-1 8q-4-2-8 0z" fill="#38a0e8"/><path d="M18 20q4 2 8 0l-2 8q-3 2-7 0z" fill="#f8c820"/></svg></button>
  <button class="task"><svg viewBox="0 0 20 20"><circle cx="10" cy="10" r="8" fill="#e03828"/><path d="M10 10L3 6a8 8 0 0 0 5 12z" fill="#38a848"/><path d="M10 10h8a8 8 0 0 1-10 8z" fill="#f8d030"/><circle cx="10" cy="10" r="4" fill="#3880e0" stroke="#fff" stroke-width="1.500"/></svg>mc X5 程式切削液位...</button>
  <button class="pin"><svg viewBox="0 0 20 20"><path d="M17 11H7q0 3 3 3l3-1h4q-2 5-7 5-6-1-6-7t7-7q6 1 6 7zM7 9h6q0-2-3-2T7 9z" fill="#48b0f0" stroke="#1868b0" stroke-width=".6"/><path d="M2 19Q0 15 8 7t11-5" fill="none" stroke="#f0c028" stroke-width="1.800"/></svg></button><button class="pin"><svg viewBox="0 0 20 20"><path d="M2 1h15v18H2z" fill="#2038a0"/><path d="M5 1h9v6H5zM4 9h12v10H4z" fill="#eef"/><path d="M5 12h8M5 15h8" stroke="#e03030"/><path d="M12 12h7v4l-3 4-4-4z" fill="#4088e0"/></svg></button><button class="pin"><svg viewBox="0 0 20 20"><path d="M1 5l9-4 9 3v12l-8 3-10-3z" fill="#d01818"/><path d="M1 5l10 2 8-3" stroke="#f08080" fill="none"/><text x="2" y="16" class="sw">SW</text></svg></button><button class="pin"><svg><use href="#mx"/></svg></button>
  <button class="task on"><svg><use href="#mx"/></svg>Mastercam Mill X6</button>
  <button class="task"><svg><use href="#docs"/></svg>posts</button>
  <button class="pin"><svg viewBox="0 0 20 20"><path d="M4 1h12v18H4z" fill="#d8ecf8" stroke="#5080a0"/><path d="M6 3h8v3H6z" fill="#70b0e0"/><path d="M6 9h8M6 12h8M6 15h8" stroke="#4070a0" stroke-width="2" stroke-dasharray="2 1"/></svg></button><button class="pin"><svg viewBox="0 0 20 20"><circle cx="10" cy="10" r="8" fill="#c8ccd8"/><path d="M2 10q2 8 8 8t8-8q-3 5-8 3-4 0-8-3z" fill="#f09020"/><path d="M4 5q6-5 12 0l-6 5z" fill="#384048"/></svg></button>
  <div class="task pair"><button><svg><use href="#note"/></svg>100I - 記事本</button><button><svg><use href="#note"/></svg>新文字文件 - 記事本</button></div>
  <div class="task pair"><button><svg><use href="#paint"/></svg>21 - 小畫家</button><button><svg><use href="#paint"/></svg>未命名 - 小畫家</button></div>
  <div class="tray"><svg viewBox="0 0 20 20"><path d="M2 8h16v9H2z" fill="#d8dce0" stroke="#777"/><path d="M4 10h12M4 13h12" stroke="#666" stroke-dasharray="2 1"/><path d="M9 8q0-4 5-6" stroke="#bbb" fill="none"/></svg><span class="mark">三维网www.3dportal.cn</span><span class="clock">09:29</span></div>
</nav>
</body>
</html>
```
FILE: styles.css
```css
* { box-sizing: border-box; }
html, body { height: 100%; }
body {
  margin: 0; min-height: 100vh; display: flex; flex-direction: column; overflow: hidden;
  background: #000; color: #000;
  font: 12px/16px "Liberation Sans", "Noto Sans CJK TC", sans-serif;
}
button { margin: 0; padding: 0; border: 0; background: none; font: inherit; color: inherit; }
h1, h2, h3, p, ul { margin: 0; padding: 0; font-size: 12px; font-weight: 400; }
ul { list-style: none; }
i { font-style: normal; }
svg { width: 16px; height: 16px; flex: none; display: block; }
.defs { position: absolute; width: 0; height: 0; }

/* window caption and menu */
.titlebar {
  flex: none; height: 22px; display: flex; align-items: center; gap: 4px; padding-left: 0;
  border-bottom: 1px solid #0c2c60;
  background: radial-gradient(ellipse 90px 18px at 70px 11px, #a8c4e4 60%, transparent 100%), linear-gradient(90deg, #1450a4, #1a60b8 40%, #2470c0 46%, #1a5cac 60%, #0c4288 80%, #1a5ca0);
}
.titlebar .i20 { width: 17px; height: 17px; }
.titlebar h1 { font: 12px/20px "Open Sans", "Noto Sans", sans-serif; }
.caption { margin-left: auto; align-self: flex-start; display: flex; height: 19px; width: 106px; margin-right: 3px; border: 1px solid #7fa4d0; border-top: 0; border-radius: 0 0 5px 5px; }
.caption button { width: 29px; display: grid; place-items: center; border-right: 1px solid #5c88bc; }
.caption .cx { flex: 1; border: 0; color: #fff; font-weight: 700; font-size: 13px; }
.min { width: 10px; height: 4px; background: #fff; margin-top: 5px; }
.rest { width: 11px; height: 11px; border: 3px solid #fff; background: #456; box-shadow: 0 6px 8px 0 #d8f4ff; }
.menubar {
  flex: none; height: 21px; display: flex; gap: 15px; padding-left: 8px; align-items: center;
  background: linear-gradient(#fbfcfe 25%, #d8dff0 50%, #d3daee); border-bottom: 1px solid #9a98a4;
  font-family: "Open Sans", "Noto Sans CJK TC", sans-serif;
}
.menubar a { color: #7a7c82; text-decoration: none; white-space: nowrap; padding-bottom: 3px; }
.menubar a:nth-child(n+7) { padding-right: 1px; }

/* toolbars */
.bar { flex: none; display: flex; height: 31px; background: #cfd7ea; border-top: 1px solid #fff; }
.bar.two { height: 30px; border-bottom: 1px solid #9a9a9a; }
.group { display: flex; align-items: center; padding: 0 3px 0 6px; background: #f2f2f0; border-right: 1px solid #8e8e8e; border-bottom: 1px solid #9a9a9a; flex: none; }
.two .group { border-bottom: 0; }
.group.tight { padding-left: 3px; }
.grip { width: 6px; height: 20px; background: radial-gradient(circle, #aaa 1px, transparent 1px) 0 0 / 3px 4px repeat-y; }
.sep { width: 7px; height: 18px; background: linear-gradient(#777, #777) 3px 0 / 1px 100% no-repeat; }
.mtools .sep { width: 6px; }
.t { width: 23px; height: 23px; display: grid; place-items: center; flex: none; }
.t svg { grid-area: 1 / 1; }
.bar .t svg, .bar .w svg { width: 18px; height: 18px; }
.w { width: 24px; height: 22px; display: grid; place-items: center; flex: none; }
.green .t { color: #5c9008; } .red .t { color: #d82838; } .grey { color: #999; } .slate { color: #606078; }
.dim b { font: 700 10px/9px "Liberation Serif", serif; color: #1a3c9c; }
.dim b + b { border-top: 1px solid #1a3c9c; }
.t.dim b { color: #1a3c9c; }
.caret { width: 15px; height: 15px; display: grid; place-items: center; flex: none; }
.caret::before { content: ""; border: 4px solid transparent; border-top: 5px solid #222; border-bottom: 0; }
.caret.off::before { border-top-color: #999; }
.sp { width: 7px; }
.txt { width: 45px; height: 20px; border: 1px solid #a8a8b0; border-radius: 3px; background: #fbfbfb; }
.txt.off { color: #888; }
.wide .txt + .sp { width: 10px; }
.combo { height: 20px; width: 72px; border: 1px solid #a0a4ac; border-radius: 2px; background-color: #fbfbfb; font-size: 12px; margin-left: 5px; }
select, .combo {
  appearance: none; padding: 0 0 0 3px; font-family: inherit; color: #000;
  background-repeat: no-repeat; background-position: right 4px center;
  background-image: url("data:image/svg+xml,%3Csvg xmlns='http://www.w3.org/2000/svg' width='9' height='5'%3E%3Cpath d='M0 0h8L4 5z' fill='%23999'/%3E%3C/svg%3E");
}
.coords .combo { font-size: 11px; padding-left: 2px; }
.coords .sp { width: 13px; }
.run { display: flex; align-items: center; padding: 0 3px 0 6px; }
.wide { padding-right: 6px; }
.txt.key { width: 20px; }
.txt.help { border-color: #444; background: #e4e4ea; display: grid; place-items: center; color: #505068; margin: 0 5px 0 0; }
.bar .help svg { width: 14px; height: 14px; }
.dash { width: 15px; color: #999; }
.ribbon { flex: none; height: 31px; padding: 7px 0 0 188px; background: #efefee; border-bottom: 1px solid #666; font-size: 11px; }

/* two halves of the work area */
.work { display: flex; min-height: 0; position: relative; overflow: hidden; }
.upper { flex: 327 1 0; }
.lower { flex: 560 1 0; }
.vbar { flex: none; width: 29px; display: flex; flex-direction: column; align-items: center; background: #f2f1f2; border-right: 1px solid #999; padding-top: 4px; }
.vbar button { flex: none; width: 22px; height: 22px; display: grid; place-items: center; }
.vbar .pressed { width: 23px; height: 20px; border: 1px solid #555; border-radius: 3px; background: #cdd0d6; margin: 0 0 2px; }
.hgrip { flex: none; width: 22px; height: 8px; background: radial-gradient(circle, #aaa 1px, transparent 1px) 0 0 / 4px 4px repeat-x; }
.vline { flex: none; width: 19px; height: 1px; background: #999; margin: 3px 0; }
.vline.full { width: 100%; }
.lower .vbar { width: 30px; border-left: 2px solid #fff; padding-top: 7px; }
.lower .hgrip { height: 9px; }
.lower .vline { margin: 2px 0 5px; }
.fill { flex: 1; align-self: stretch; margin-top: 3px; border-top: 1px solid #888; background: #cfd7ec; }
.edge { flex: none; width: 29px; display: flex; align-items: flex-end; padding-bottom: 9px; }
.edge svg { width: 5px; height: 24px; }

.manager { flex: none; width: 314px; display: flex; flex-direction: column; background: #f2f2f2; border-right: 2px solid #8a8690; padding-right: 5px; }
.mtitle { flex: none; height: 19px; display: flex; gap: 6px; background: #b2b0b2; margin-right: -5px; padding: 2px 5px 0 5px; }
.mtitle h2 { flex: 1; font-size: 11px; line-height: 13px; }
.mtitle button { width: 16px; height: 16px; border: 1px solid #555; border-radius: 3px; background: #eee; line-height: 14px; }
.tabs { flex: none; display: flex; align-items: flex-end; height: 21px; border-bottom: 1px solid #8a92a0; padding-left: 2px; margin-bottom: 2px; }
.tabs button { height: 18px; padding: 0 4px; border: 1px solid #8a92a0; border-bottom: 0; background: #e0e0e2; font-size: 12px; }
.tabs .on { height: 20px; width: 61px; background: #fff; border-color: #fff; padding: 0; }
.mtools { flex: none; display: flex; align-items: center; height: 31px; margin-left: 3px; width: 279px; padding-left: 4px; border-top: 1px solid #999; }
.g1 { font: 700 13px "Liberation Serif", serif; color: #1a4098; }
.mtree { flex: 1; min-height: 0; margin: 6px 0 0 5px; background: #fdfffd; border: 1px solid #66788c; overflow: hidden; padding: 1px 0 0 12px; }
.lower .manager { padding-bottom: 4px; }
.lower .mtree { margin: 0 0 0 5px; border-top: 0; padding: 0; display: flex; align-items: flex-end; }

/* trees */
.tree li { background: repeating-linear-gradient(#777 0 1px, transparent 1px 2px) 0 0 / 1px 100% no-repeat; }
.tree li.last { background-size: 1px 8px; }
.tree li.root { background: none; }
.tree li.first { background-position: 0 8px; }
.tree li ul { margin-left: 19px; }
.row { display: flex; align-items: center; height: 16px; white-space: nowrap; }
.exp { flex: none; width: 9px; height: 9px; margin-left: -4px; border: 1px solid #8a9098; background: linear-gradient(#2848a0, #2848a0) center / 5px 1px no-repeat, #f6f6f6; }
.exp.plus { background: linear-gradient(#2848a0, #2848a0) center / 5px 1px no-repeat, linear-gradient(#2848a0, #2848a0) center / 1px 5px no-repeat, #f6f6f6; }
.stub { flex: none; width: 27px; height: 1px; margin-right: 4px; background: repeating-linear-gradient(90deg, #777 0 1px, transparent 1px 2px); }
.exp + .stub { width: 22px; }
.stub.s { width: 10px; margin-right: 2px; }
.exp + .stub.s { width: 5px; }
.stub.s + svg { width: 13px; height: 13px; margin-right: 6px; }
.tree mark { background: #3399ff; color: #fff; height: 16px; padding: 0 2px; margin-left: -2px; }
.ops { font-family: "Liberation Serif", "Noto Sans CJK TC", serif; }
.ops .stub { width: 11px; margin-right: 0; }
.ops .exp + .stub { width: 6px; }
.ops .row svg { margin-right: 5px; }
.ops mark { margin-left: -3px; flex: none; min-width: 220px; }

/* drawing area */
.canvas { flex: 1; min-width: 0; position: relative; background: #000; display: flex; flex-direction: column; justify-content: flex-end; overflow: hidden; }
.dialog { position: absolute; left: 92px; width: 863px; border: 1px solid #b4bcbc; }
.dialog.top { top: 18px; border-bottom: 0; border-radius: 7px 7px 0 0; padding: 0 5px; background: linear-gradient(#5c5c5c, #98a0a0 190px, #b0b4b4 197px, #101418 198px); }
.dialog.bottom { top: 0; border-top: 0; border-radius: 0 0 6px 6px; padding: 0 5px 5px; background: #10181a; }
.dtitle { height: 28px; display: flex; align-items: center; margin: 0 -5px; padding: 0 4px 0 6px; border-radius: 6px 6px 0 0; background: radial-gradient(ellipse 90px 16px at 85px 13px, #8c8c8c 60%, transparent 100%), linear-gradient(90deg, #585858, #333 15%, #10181a 22%, #06080a 75%, #555c5c 92%, #707878); }
.dtitle h2 { flex: 1; margin-left: 7px; color: #111; font: 12px/20px "Open Sans", "Noto Sans CJK TC", sans-serif; padding-bottom: 2px; }
.dtitle button { align-self: flex-start; width: 48px; height: 19px; border: 1px solid #e0b8b0; border-top: 0; border-radius: 0 0 5px 5px; background: linear-gradient(#d89888 45%, #b82818 50%, #c84838); color: #fff; font-weight: 700; }
.dico { width: 14px; height: 11px; border: 2px solid #eee; background: linear-gradient(90deg, #388878 50%, #ddd 50%); }
.client { background: #f0f0f0; }
.dtools { height: 42px; display: flex; align-items: flex-start; padding: 8px 0 0 11px; background: #f6f6f6; border-bottom: 1px solid #aaa; }
.dtools svg { width: 24px; height: 24px; margin-right: 7px; }
.dtools i { width: 1px; height: 24px; background: #666; margin: 0 8px 0 -1px; }
.dbody { display: flex; gap: 11px; padding: 0 9px 0 7px; }
.top .dbody { padding-top: 12px; }
.left { flex: none; width: 173px; }
.ptree { background: #fff; border: 1px solid #6c7c94; padding: 1px 0 0 12px; }
.top .ptree { height: 240px; }
.bottom .ptree { border-top: 0; padding-top: 0; height: 124px; }
.page { flex: 1; border: 2px solid #6c6c6c; border-right: 1px solid #ddd; border-bottom: 1px solid #fff; }
.bottom .page { border-top: 0; height: 326px; flex: none; }
.frame { width: 385px; border: 5px solid #ee1622; padding-left: 29px; font-size: 11px; }
.frame.open { margin: 66px 0 0 145px; border-bottom: 0; padding-top: 41px; }
.frame.closed { margin-left: 145px; border-top: 0; height: 200px; overflow: hidden; }
.frame.closed .coolant { margin-top: -8px; }
.coolant { display: grid; grid-template-columns: 129px 72px 72px; row-gap: 5px; }
.coolant label { line-height: 20px; }
.coolant select { height: 21px; width: 72px; border: 1px solid #606060; border-radius: 3px; font-size: 12px; background-color: #e4e4e4; box-shadow: inset 0 8px #f0f0f0;
  background-image: url("data:image/svg+xml,%3Csvg xmlns='http://www.w3.org/2000/svg' width='9' height='5'%3E%3Cpath d='M0 0h8L4 5z' fill='%23000'/%3E%3C/svg%3E"); }
.coolant select + select { margin-left: 18px; }
.coolant select:disabled { opacity: 1; border-color: #b0b0b4; background-color: #f4f4f4; box-shadow: none;
  background-image: url("data:image/svg+xml,%3Csvg xmlns='http://www.w3.org/2000/svg' width='9' height='5'%3E%3Cpath d='M0 0h8L4 5z' fill='%23aaa'/%3E%3C/svg%3E"); }
h3 { padding-top: 8px; line-height: 24px; }
.quick { height: 172px; border: 1px solid #6c7c94; background: #fff; padding: 2px 1px 2px 2px; }
.qrow { display: flex; height: 151px; overflow: hidden; }
.quick table { flex: 1; border-collapse: collapse; align-self: flex-start; }
.quick th, .quick td { padding: 0; height: 17px; font-weight: 400; text-align: left; line-height: 17px; }
.quick th { width: 82px; padding-left: 4px; }
.quick .in { padding-left: 9px; }
.vscroll { width: 16px; display: flex; flex-direction: column; align-items: center; background: #f0f0f0; padding: 7px 0 6px; }
.vscroll b { width: 15px; height: 83px; margin: 6px 0 auto; border: 1px solid #8a8a8a; border-radius: 2px; background: repeating-linear-gradient(#444 0 1px, transparent 1px 3px) center / 6px 8px no-repeat, linear-gradient(90deg, #f4f4f4 45%, #ccc 50%, #ddd); }
.hscroll { height: 16px; flex: 1; display: flex; align-items: center; background: #f0f0f0; padding: 0 6px; }
.hscroll b { height: 15px; width: 105px; margin: 0 auto 0 8px; border: 1px solid #8a8a8a; border-radius: 2px; background: repeating-linear-gradient(90deg, #444 0 1px, transparent 1px 3px) center / 8px 6px no-repeat, linear-gradient(#f4f4f4 45%, #ccc 50%, #ddd); }
.quick .hscroll { margin-right: 16px; }
.mtree .hscroll { margin-bottom: 2px; }
.mtree .hscroll b { width: 242px; }
.al, .ar, .au, .ad { border: 4px solid transparent; }
.al { border-right-color: #333; border-left: 0; } .ar { border-left-color: #333; border-right: 0; }
.au { border-bottom-color: #333; border-top: 0; } .ad { border-top-color: #333; border-bottom: 0; }
.legend { display: flex; gap: 9px; align-items: center; height: 22px; padding-left: 1px; }
.quick + .legend { margin-top: 3px; }
.legend svg { width: 13px; height: 13px; }
.right { flex: 1; display: flex; flex-direction: column; justify-content: space-between; }
.bottom .dbody { height: 399px; }
.actions { display: flex; justify-content: flex-end; gap: 9px; padding-bottom: 8px; }
.actions button { width: 52px; height: 26px; border: 1px solid #707070; border-radius: 3px; display: grid; place-items: center; background: linear-gradient(#f4f4f4 50%, #dcdcdc 50%); }
.actions svg { width: 20px; height: 20px; }
.actions .big { width: 24px; height: 24px; }
.arrow { position: absolute; left: 847px; top: 188px; width: 236px; height: 82px; }
.memo { position: absolute; left: 1102px; top: 185px; color: #3f48cc; font-size: 21px; line-height: 34px; }
.hud { display: flex; justify-content: space-between; align-items: flex-end; }
.axes { padding: 0 0 7px 6px; color: #c8c8c8; }
.axes svg { width: 50px; height: 50px; margin: 0 0 3px 29px; font-size: 11px; }
.units { width: 92px; margin-bottom: 6px; padding-left: 25px; color: #ccc; display: grid; border-left: 1px solid #a03a18; background: linear-gradient(#a03a18, #a03a18) 0 14px / 100% 1px no-repeat; }
.units b { font-weight: 400; color: #10f010; line-height: 13px; padding-left: 2px; }
.units span { line-height: 18px; }

/* status bar */
.status { flex: none; height: 28px; display: flex; background: #f0eeee; border-top: 2px solid #fff; border-bottom: 1px solid #333; }
.status .frag { width: 30px; border-top: 1px solid #777; overflow: hidden; display: flex; gap: 6px; padding: 3px 0 0 2px; }
.status button, .z, .lv { height: 19px; border: 1px solid #a0a4b0; border-radius: 3px; background: #f8f8f8; color: #222; line-height: 15px; }
.frag button { width: 12px; flex: none; }
.fields { flex: 1; border-top: 1px solid #777; display: flex; align-items: flex-start; justify-content: flex-end; gap: 5px; padding: 4px 5px 0 0; }
.fields .a { width: 26px; } .fields .b { width: 62px; } .fields .c { width: 32px; } .fields .d { width: 41px; } .fields .e { width: 50px; font-size: 12px; }
.z { width: 11px; padding-left: 1px; }
.zbox { display: flex; align-items: center; width: 90px; height: 20px; background: #fff; }
.zbox input { width: 69px; height: 19px; border: 0; padding: 0 0 0 1px; font: inherit; color: #fff; background: linear-gradient(90deg, #3399ff 19px, #ffff78 19px); }
.zbox .caret { margin-left: auto; }
.fields .color { width: 32px; background: #00ff00; border-color: #00d000; border-radius: 0; }
.fields .cb { margin-left: -5px; width: 17px; }
.lv { width: 30px; padding-top: 1px; }
.level { width: 106px; height: 20px; margin-left: -5px; border: 0; background-color: #fff; font-size: 12px; background-image: url("data:image/svg+xml,%3Csvg xmlns='http://www.w3.org/2000/svg' width='9' height='5'%3E%3Cpath d='M0 0h8L4 5z' fill='%23000'/%3E%3C/svg%3E"); }
.fields .pick { display: flex; align-items: center; justify-content: space-between; background: #fff; border: 0; }
.p1 { width: 37px; } .p2 { width: 63px; } .p3 { width: 69px; }
.pick hr { flex: 1; border: 0; height: 1px; background: #000; margin: 0 0 0 2px; }
.p2 hr { height: 4px; }

/* taskbar */
.taskbar { flex: none; height: 30px; display: flex; align-items: stretch; color: #fff; font: 12px/16px "Open Sans", "Noto Sans CJK TC", sans-serif; background: linear-gradient(90deg, #3c80a8, #3c88b0 45%, #2c70a4 65%, #1c4f88 80%, #143c70); }
.taskbar .frag { width: 30px; background: #1c3c60; padding-top: 8px; display: flex; overflow: hidden; }
.frag i { margin: -8px 0 0 8px; flex: 1; border: 1px solid #8ab; }
.start { width: 60px; padding-left: 9px; display: flex; align-items: flex-end; }
.start svg { width: 36px; height: 36px; margin-bottom: -1px; }
.task { width: 159px; height: 28px; margin-right: 3px; padding: 0 6px; display: flex; gap: 3px; align-items: center; border: 1px solid #a4cce0; border-radius: 3px; background: linear-gradient(#88b4cc, #4c8cb0 45%, #3478a4); white-space: nowrap; overflow: hidden; }
.start + .task { margin-right: 0; }
.taskbar svg { width: 20px; height: 20px; }
.taskbar .start svg { width: 36px; height: 36px; }
.task.on { background: linear-gradient(110deg, #d4e0e8, #a4c4d4 50%, #74a4bc); margin-left: 3px; }
.pin { width: 46px; display: grid; place-items: center; }
.sw { font: 700 10px "Liberation Sans", sans-serif; fill: #fff; }
.pair { width: 318px; padding: 0; gap: 0; margin-left: 0; }
.pair button { flex: 1; height: 100%; display: flex; align-items: center; gap: 2px; padding-left: 5px; }
.pair button + button { background: linear-gradient(90deg, #cde4, #cde1); }
.pin + .pin + .pair ~ .pair { background: linear-gradient(#6c9cc0, #3c78a4 45%, #245c90); }
.tray { margin-left: auto; width: 253px; position: relative; display: flex; align-items: center; justify-content: space-between; overflow: hidden; }
.clock { margin-right: -6px; }
.mark { position: absolute; left: 31px; top: 5px; font: 700 18px/22px "Liberation Sans", "Noto Sans CJK SC", sans-serif; color: #e02030; -webkit-text-stroke: 3px #fff; paint-order: stroke fill; white-space: nowrap; }
```
